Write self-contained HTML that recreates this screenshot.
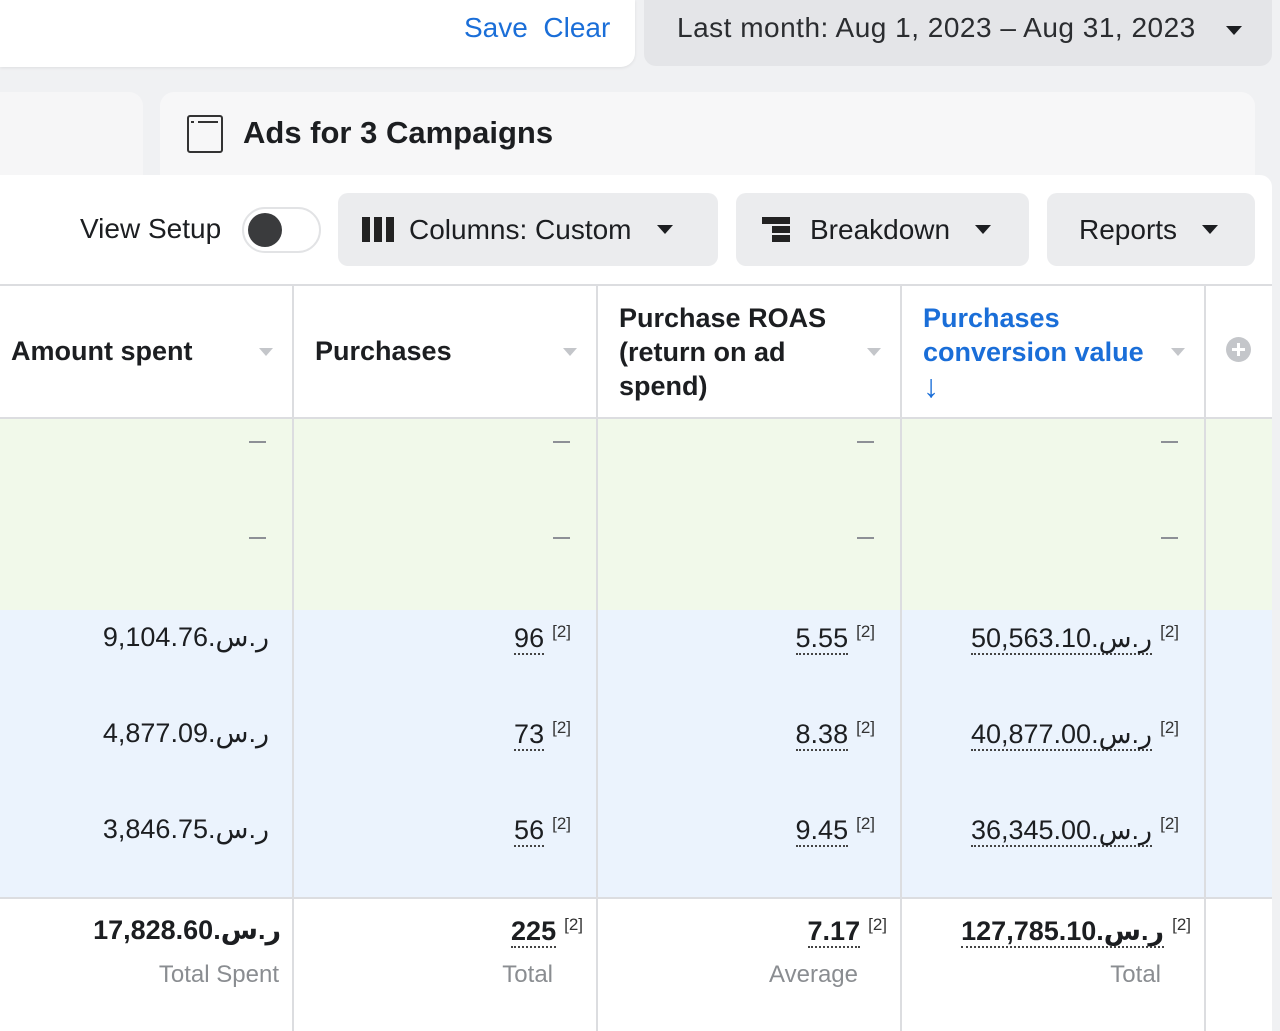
<!DOCTYPE html>
<html><head><meta charset="utf-8"><style>
*{margin:0;padding:0;box-sizing:border-box}
body{width:1280px;height:1031px;overflow:hidden;background:#f0f1f3;font-family:"Liberation Sans","DejaVu Sans",sans-serif;color:#1c1e21;position:relative}
.a{position:absolute}
.tri{display:inline-block;width:0;height:0;border-left:8px solid transparent;border-right:8px solid transparent;border-top:9px solid #1c1e21}
.stri{position:absolute;width:0;height:0;border-left:7px solid transparent;border-right:7px solid transparent;border-top:8px solid #c4c6ca}
.btn{position:absolute;background:#ebecee;border-radius:10px;top:193px;height:73px;font-size:28px;display:flex;align-items:center}
.vl{position:absolute;top:285px;width:2px;height:746px;background:#dcdde0}
.num{position:absolute;font-size:27px;text-align:right;white-space:nowrap}
.u{border-bottom:2px dotted #444;}
.sup{font-size:17px;vertical-align:super;margin-left:8px;color:#333}
.dash{position:absolute;width:17px;height:2px;background:#8d9096}
.h{position:absolute;font-size:27px;font-weight:bold;line-height:34px}
.lbl{position:absolute;font-size:24px;color:#8a8d91;text-align:right}
bdi{unicode-bidi:isolate;direction:rtl}
</style></head><body>
<div class="a" style="left:0;top:0;width:635px;height:67px;background:#fff;border-radius:0 0 14px 0;box-shadow:0 1px 3px rgba(0,0,0,.08)"></div>
<div class="a" style="left:464px;top:12px;font-size:28px;color:#1a6ed8">Save&nbsp;&nbsp;Clear</div>
<div class="a" style="left:644px;top:0;width:628px;height:66px;background:#e4e5e8;border-radius:0 0 12px 12px"></div>
<div class="a" style="left:677px;top:12px;font-size:28px;color:#2b2d30;letter-spacing:0.5px">Last month: Aug 1, 2023 – Aug 31, 2023</div>
<div class="a" style="left:1226px;top:22px"><span class="tri"></span></div>
<div class="a" style="left:0;top:92px;width:143px;height:100px;background:#f6f6f7;border-radius:0 14px 0 0"></div>
<div class="a" style="left:160px;top:92px;width:1095px;height:100px;background:#f7f7f8;border-radius:14px 14px 0 0"></div>
<div class="a" style="left:187px;top:115px;width:36px;height:38px;border:2px solid #333;border-radius:3px"></div>
<div class="a" style="left:191px;top:121px;width:3px;height:2px;background:#333"></div>
<div class="a" style="left:198px;top:121px;width:20px;height:2px;background:#333"></div>
<div class="a" style="left:243px;top:115px;font-size:31px;font-weight:bold">Ads for 3 Campaigns</div>
<div class="a" style="left:0;top:175px;width:1272px;height:856px;background:#fff;border-radius:0 12px 0 0"></div>
<div class="a" style="left:80px;top:213px;font-size:28px">View Setup</div>
<div class="a" style="left:242px;top:207px;width:79px;height:46px;border:2px solid #e2e3e5;border-radius:23px;background:#fff"></div>
<div class="a" style="left:248px;top:213px;width:34px;height:34px;border-radius:50%;background:#3a3b3d"></div>
<div class="btn" style="left:338px;width:380px"><span style="margin-left:24px;display:flex;gap:4px"><i style="width:8px;height:25px;background:#222;display:block"></i><i style="width:8px;height:25px;background:#222;display:block"></i><i style="width:8px;height:25px;background:#222;display:block"></i></span><span style="margin-left:15px">Columns: Custom</span><span class="tri" style="margin-left:25px"></span></div>
<div class="btn" style="left:736px;width:293px"><span style="margin-left:26px;display:flex;flex-direction:column;gap:2px"><i style="width:28px;height:7px;background:#222;display:block"></i><i style="width:18px;height:7px;background:#222;display:block;margin-left:10px"></i><i style="width:18px;height:7px;background:#222;display:block;margin-left:10px"></i></span><span style="margin-left:20px">Breakdown</span><span class="tri" style="margin-left:25px"></span></div>
<div class="btn" style="left:1047px;width:208px"><span style="margin-left:32px">Reports</span><span class="tri" style="margin-left:25px"></span></div>
<div class="a" style="left:0;top:284px;width:1272px;height:2px;background:#dcdde0"></div>
<div class="a" style="left:0;top:417px;width:1272px;height:2px;background:#dcdde0"></div>
<div class="a" style="left:0;top:419px;width:1272px;height:191px;background:#f1f9ea"></div>
<div class="a" style="left:0;top:610px;width:1272px;height:288px;background:#ebf3fd"></div>
<div class="a" style="left:0;top:897px;width:1272px;height:2px;background:#dcdde0"></div>
<div class="vl" style="left:292px"></div><div class="vl" style="left:596px"></div><div class="vl" style="left:900px"></div><div class="vl" style="left:1204px"></div>
<div class="h" style="left:11px;top:334px">Amount spent</div><div class="stri" style="left:259px;top:348px"></div>
<div class="h" style="left:315px;top:334px">Purchases</div><div class="stri" style="left:563px;top:348px"></div>
<div class="h" style="left:619px;top:301px">Purchase ROAS<br>(return on ad<br>spend)</div><div class="stri" style="left:867px;top:348px"></div>
<div class="h" style="left:923px;top:301px;color:#1a6ed8">Purchases<br>conversion value<br><span style="font-weight:normal;font-size:32px">↓</span></div><div class="stri" style="left:1171px;top:348px"></div>
<div class="a" style="left:1226px;top:337px;width:25px;height:25px;border-radius:50%;background:#c4c6ca"></div>
<div class="a" style="left:1232px;top:348px;width:13px;height:3px;background:#fff"></div><div class="a" style="left:1237px;top:343px;width:3px;height:13px;background:#fff"></div>
<div class="dash" style="left:249px;top:441px"></div><div class="dash" style="left:553px;top:441px"></div><div class="dash" style="left:857px;top:441px"></div><div class="dash" style="left:1161px;top:441px"></div>
<div class="dash" style="left:249px;top:537px"></div><div class="dash" style="left:553px;top:537px"></div><div class="dash" style="left:857px;top:537px"></div><div class="dash" style="left:1161px;top:537px"></div>
<div class="num" style="right:1011px;top:622px">9,104.76<bdi>ر.س.</bdi></div>
<div class="num" style="right:1011px;top:718px">4,877.09<bdi>ر.س.</bdi></div>
<div class="num" style="right:1011px;top:814px">3,846.75<bdi>ر.س.</bdi></div>
<div class="num" style="right:709px;top:622px"><span class="u">96</span><span class="sup">[2]</span></div>
<div class="num" style="right:709px;top:718px"><span class="u">73</span><span class="sup">[2]</span></div>
<div class="num" style="right:709px;top:814px"><span class="u">56</span><span class="sup">[2]</span></div>
<div class="num" style="right:405px;top:622px"><span class="u">5.55</span><span class="sup">[2]</span></div>
<div class="num" style="right:405px;top:718px"><span class="u">8.38</span><span class="sup">[2]</span></div>
<div class="num" style="right:405px;top:814px"><span class="u">9.45</span><span class="sup">[2]</span></div>
<div class="num" style="right:101px;top:622px"><span class="u">50,563.10<bdi>ر.س.</bdi></span><span class="sup">[2]</span></div>
<div class="num" style="right:101px;top:718px"><span class="u">40,877.00<bdi>ر.س.</bdi></span><span class="sup">[2]</span></div>
<div class="num" style="right:101px;top:814px"><span class="u">36,345.00<bdi>ر.س.</bdi></span><span class="sup">[2]</span></div>
<div class="num" style="right:999px;top:915px;font-weight:bold">17,828.60<bdi>ر.س.</bdi></div>
<div class="num" style="right:697px;top:915px;font-weight:bold"><span class="u">225</span><span class="sup" style="font-weight:normal">[2]</span></div>
<div class="num" style="right:393px;top:915px;font-weight:bold"><span class="u">7.17</span><span class="sup" style="font-weight:normal">[2]</span></div>
<div class="num" style="right:89px;top:915px;font-weight:bold"><span class="u">127,785.10<bdi>ر.س.</bdi></span><span class="sup" style="font-weight:normal">[2]</span></div>
<div class="lbl" style="right:1001px;top:961px">Total Spent</div>
<div class="lbl" style="right:727px;top:961px">Total</div>
<div class="lbl" style="right:422px;top:961px">Average</div>
<div class="lbl" style="right:119px;top:961px">Total</div>
</body></html>
